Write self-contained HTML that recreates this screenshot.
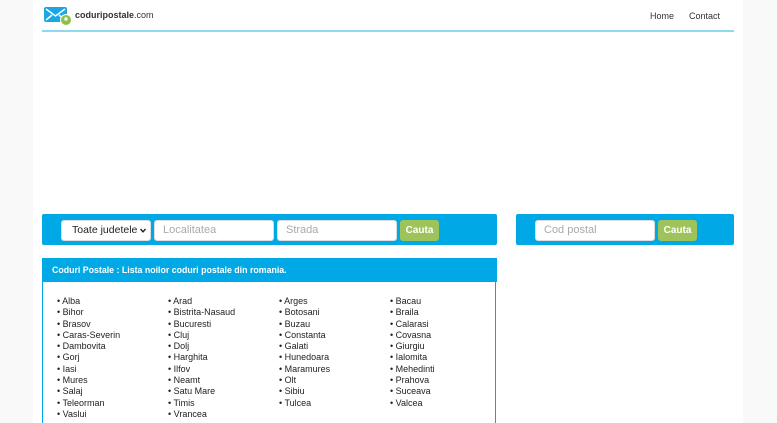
<!DOCTYPE html>
<html><head><style>
html,body{margin:0;height:423px;overflow:hidden}
body{background:#f9f9f9;font-family:"Liberation Sans",sans-serif;width:777px;position:relative}
.wrap{position:absolute;left:33px;top:0;width:710px;height:423px;background:#fff}
.hdr{position:absolute;left:42px;top:30px;width:692px;height:2px;background:#8fd8f0}
.abs{position:absolute}
.blue{background:#00a9e6;border-radius:2px}
.inp{position:absolute;background:#fff;border:1px solid #ddd;border-radius:3px;font-size:11px;color:#aaa;line-height:19px;padding-left:8px;box-sizing:border-box;height:21px}
.btn{position:absolute;background:#9dc35a;color:#fff;font-weight:bold;font-size:10px;border-radius:3px;height:21px;line-height:21px;text-align:center}
.col{position:absolute;top:296px;font-size:9px;color:#222;line-height:11.3px}
</style></head><body>
<div class="wrap"></div>
<div class="hdr"></div>
<svg class="abs" style="left:44px;top:7px" width="28" height="19" viewBox="0 0 28 19">
<rect x="0" y="0" width="23" height="15" rx="2" fill="#1ba7e3"/>
<path d="M2 2 L11.5 9 L21 2 M2 13 L8 8 M21 13 L15 8" stroke="#fff" stroke-width="1.5" fill="none"/>
<circle cx="22" cy="13" r="5.5" fill="#8dc049" stroke="#fff" stroke-width="1"/>
<circle cx="22" cy="12" r="1.7" fill="#fff"/>
</svg>
<div class="abs" style="left:75px;top:10px;font-size:9px;color:#333"><b>coduripostale</b>.com</div>
<div class="abs" style="left:650px;top:11px;font-size:9px;color:#333">Home</div>
<div class="abs" style="left:689px;top:11px;font-size:9px;color:#333">Contact</div>

<div class="abs blue" style="left:42px;top:214px;width:455px;height:31px"></div>
<div class="inp" style="left:61px;top:220px;width:90px;color:#222;padding-left:10px;font-size:10.5px">Toate judetele<svg style="position:absolute;right:4px;top:7px" width="6" height="5" viewBox="0 0 6 5"><path d="M0.5 1 L3 3.8 L5.5 1" stroke="#222" stroke-width="1.4" fill="none"/></svg></div>
<div class="inp" style="left:154px;top:220px;width:120px">Localitatea</div>
<div class="inp" style="left:277px;top:220px;width:120px">Strada</div>
<div class="btn" style="left:400px;top:220px;width:39px">Cauta</div>

<div class="abs blue" style="left:516px;top:214px;width:218px;height:31px"></div>
<div class="inp" style="left:535px;top:220px;width:120px">Cod postal</div>
<div class="btn" style="left:658px;top:220px;width:39px">Cauta</div>

<div class="abs" style="left:42px;top:258px;width:454px;height:170px;border:1px solid #00a9e6;border-radius:2px;box-sizing:border-box"></div>
<div class="abs" style="left:42px;top:258px;width:455px;height:24px;background:#00a9e6;color:#fff;font-weight:bold;font-size:8.8px;line-height:24px;text-indent:10px">Coduri Postale : Lista noilor coduri postale din romania.</div>

<div class="col" style="left:57px">• Alba<br>• Bihor<br>• Brasov<br>• Caras-Severin<br>• Dambovita<br>• Gorj<br>• Iasi<br>• Mures<br>• Salaj<br>• Teleorman<br>• Vaslui</div>
<div class="col" style="left:168px">• Arad<br>• Bistrita-Nasaud<br>• Bucuresti<br>• Cluj<br>• Dolj<br>• Harghita<br>• Ilfov<br>• Neamt<br>• Satu Mare<br>• Timis<br>• Vrancea</div>
<div class="col" style="left:279px">• Arges<br>• Botosani<br>• Buzau<br>• Constanta<br>• Galati<br>• Hunedoara<br>• Maramures<br>• Olt<br>• Sibiu<br>• Tulcea</div>
<div class="col" style="left:390px">• Bacau<br>• Braila<br>• Calarasi<br>• Covasna<br>• Giurgiu<br>• Ialomita<br>• Mehedinti<br>• Prahova<br>• Suceava<br>• Valcea</div>
</body></html>
